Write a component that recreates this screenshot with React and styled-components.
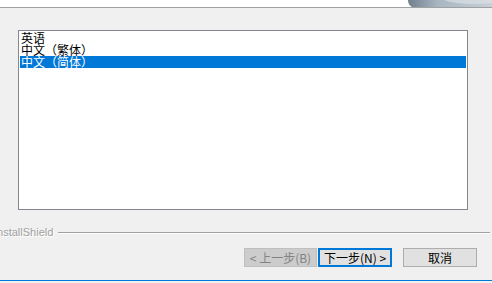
import React from 'react'
import styled, { createGlobalStyle } from 'styled-components'

const Global = createGlobalStyle`
  html, body {
    margin: 0;
    padding: 0;
    background: #f0f0f0;
    overflow: hidden;
  }
  #root {
    width: 492px;
    height: 283px;
  }
`

const Dialog = styled.div`
  width: 492px;
  height: 283px;
  display: flex;
  flex-direction: column;
  background: #f0f0f0;
  font-family: "Noto Sans CJK SC", "Liberation Sans", sans-serif;
  font-size: 12px;
  overflow: hidden;
`

const Header = styled.div`
  height: 7px;
  flex: none;
  background: #fff;
  border-bottom: 1px solid #a0a0a0;
  display: flex;
  justify-content: flex-end;
  overflow: hidden;
`

const Body = styled.div`
  flex: 1;
  padding: 22px 0 0 18px;
  display: flex;
  flex-direction: column;
`

const ListBox = styled.div`
  width: 446px;
  height: 176px;
  background: #fff;
  border: 1px solid #828790;
  padding: 1px 1px;
  display: flex;
  flex-direction: column;
`

const Item = styled.div`
  height: 12px;
  line-height: 12px;
  padding-left: 1px;
  font-size: 12px;
  color: ${p => (p.$selected ? '#fff' : '#000')};
  background: ${p => (p.$selected ? '#0078d7' : 'transparent')};
  white-space: nowrap;
`

const Brand = styled.div`
  display: flex;
  align-items: center;
  margin: 16px 2px 0 -24px;
  height: 12px;
`

const BrandText = styled.span`
  font-family: "Liberation Sans", "DejaVu Sans", sans-serif;
  font-size: 11px;
  color: #a0a0a0;
  text-shadow: 1px 1px 0 #fff;
  margin-right: 5px;
`

const Rule = styled.div`
  flex: 1;
  height: 1px;
  background: #a0a0a0;
  box-shadow: 0 1px 0 #fff;
`

const Buttons = styled.div`
  display: flex;
  margin: 10px 0 0 226px;
`

const Button = styled.div`
  box-sizing: border-box;
  width: ${p => p.$w || 74}px;
  height: 19px;
  margin-left: ${p => p.$gap || 0}px;
  display: flex;
  align-items: center;
  justify-content: center;
  font-size: 12px;
  color: ${p => (p.$disabled ? '#838383' : '#000')};
  background: ${p => (p.$disabled ? '#cccccc' : '#e1e1e1')};
  border: ${p => (p.$default ? '2px solid #0078d7' : p.$disabled ? '1px solid #bfbfbf' : '1px solid #adadad')};
  white-space: nowrap;
`

const Footer = styled.div`
  height: 1px;
  background: #0078d7;
  margin-bottom: 2px;
`

const Banner = () => (
  <svg width="92" height="7" viewBox="0 0 92 7">
    <defs>
      <linearGradient id="g" x1="0" y1="0" x2="1" y2="0">
        <stop offset="0" stopColor="#6f7f8c" />
        <stop offset="0.35" stopColor="#a8b6c1" />
        <stop offset="1" stopColor="#c8d0d6" />
      </linearGradient>
    </defs>
    <path d="M8 0 H92 V7 H12 Q8 5 8 0 Z" fill="url(#g)" />
    <path d="M44 0 Q60 6 92 3 V0 Z" fill="#dfe4e8" opacity="0.6" />
  </svg>
)

export default function App() {
  return (
    <>
      <Global />
      <Dialog>
        <Header>
          <Banner />
        </Header>
        <Body>
          <ListBox>
            <Item>英语</Item>
            <Item>中文（繁体）</Item>
            <Item $selected>中文（简体）</Item>
          </ListBox>
          <Brand>
            <BrandText>InstallShield</BrandText>
            <Rule />
          </Brand>
          <Buttons>
            <Button $disabled $w={73}>&lt; 上一步(B)</Button>
            <Button $default $w={74} $gap={1}>下一步(N) &gt;</Button>
            <Button $w={74} $gap={11}>取消</Button>
          </Buttons>
        </Body>
        <Footer />
      </Dialog>
    </>
  )
}
